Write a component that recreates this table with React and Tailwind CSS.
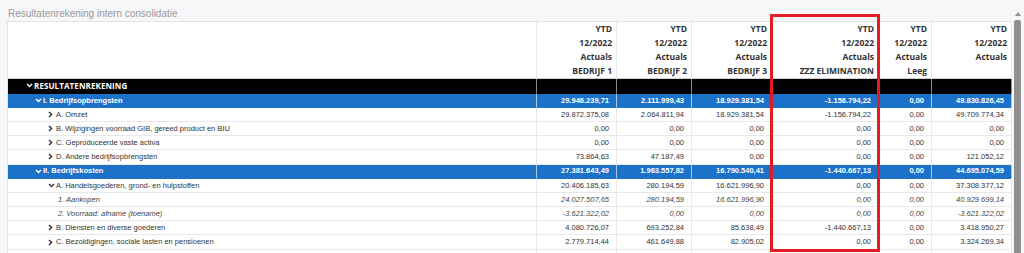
const COLS = 'grid grid-cols-[529px_80px_75px_80px_107px_53px_80px]'

const headers = [
  ['YTD', '12/2022', 'Actuals', 'BEDRIJF 1'],
  ['YTD', '12/2022', 'Actuals', 'BEDRIJF 2'],
  ['YTD', '12/2022', 'Actuals', 'BEDRIJF 3'],
  ['YTD', '12/2022', 'Actuals', 'ZZZ ELIMINATION'],
  ['YTD', '12/2022', 'Actuals', 'Leeg'],
  ['YTD', '12/2022', 'Actuals', ''],
]

const rows = [
  { label: 'RESULTATENREKENING', kind: 'black', chev: 'down', pl: 'pl-[18px]', values: ['', '', '', '', '', ''] },
  { label: 'I. Bedrijfsopbrengsten', kind: 'blue', chev: 'down', pl: 'pl-[27px]', values: ['29.946.239,71', '2.111.999,43', '18.929.381,54', '-1.156.794,22', '0,00', '49.830.826,45'] },
  { label: 'A. Omzet', kind: 'row', chev: 'right', pl: 'pl-[40px]', values: ['29.872.375,08', '2.064.811,94', '18.929.381,54', '-1.156.794,22', '0,00', '49.709.774,34'] },
  { label: 'B. Wijzigingen voorraad GIB, gereed product en BIU', kind: 'row', chev: 'right', pl: 'pl-[40px]', values: ['0,00', '0,00', '0,00', '0,00', '0,00', '0,00'] },
  { label: 'C. Geproduceerde vaste activa', kind: 'row', chev: 'right', pl: 'pl-[40px]', values: ['0,00', '0,00', '0,00', '0,00', '0,00', '0,00'] },
  { label: 'D. Andere bedrijfsopbrengsten', kind: 'row', chev: 'right', pl: 'pl-[40px]', values: ['73.864,63', '47.187,49', '0,00', '0,00', '0,00', '121.052,12'] },
  { label: 'II. Bedrijfskosten', kind: 'blue', chev: 'down', pl: 'pl-[27px]', values: ['27.381.643,49', '1.963.557,82', '16.790.540,41', '-1.440.667,13', '0,00', '44.695.074,59'] },
  { label: 'A. Handelsgoederen, grond- en hulpstoffen', kind: 'row', chev: 'down', pl: 'pl-[40px]', values: ['20.406.185,63', '280.194,59', '16.621.996,90', '0,00', '0,00', '37.308.377,12'] },
  { label: '1. Aankopen', kind: 'italic', chev: null, pl: 'pl-[50px]', values: ['24.027.507,65', '280.194,59', '16.621.996,90', '0,00', '0,00', '40.929.699,14'] },
  { label: '2. Voorraad: afname (toename)', kind: 'italic', chev: null, pl: 'pl-[50px]', values: ['-3.621.322,02', '0,00', '0,00', '0,00', '0,00', '-3.621.322,02'] },
  { label: 'B. Diensten en diverse goederen', kind: 'row', chev: 'right', pl: 'pl-[40px]', values: ['4.080.726,07', '693.252,84', '85.638,49', '-1.440.667,13', '0,00', '3.418.950,27'] },
  { label: 'C. Bezoldigingen, sociale lasten en pensioenen', kind: 'row', chev: 'right', pl: 'pl-[40px]', values: ['2.779.714,44', '461.649,88', '82.905,02', '0,00', '0,00', '3.324.269,34'] },
  { label: 'D. Afschrijvingen en waardeverminderingen op oprichtingskosten, op immateriële en materiële vaste activa', kind: 'row', chev: 'right', pl: 'pl-[40px]', values: ['45.871,00', '112.344,49', '0,00', '0,00', '0,00', '158.215,49'] },
]

function Chevron({ dir, color }) {
  if (dir === 'down') {
    return (
      <svg width="7" height="5" viewBox="0 0 7 5" className="mr-[1px] shrink-0">
        <path d="M1 1 L3.5 3.6 L6 1" fill="none" stroke={color} strokeWidth="1.4" />
      </svg>
    )
  }
  return (
    <svg width="5" height="7" viewBox="0 0 5 7" className="mr-[3px] shrink-0">
      <path d="M1 1 L3.6 3.5 L1 6" fill="none" stroke={color} strokeWidth="1.4" />
    </svg>
  )
}

function Row({ row }) {
  const styles = {
    black: { bg: 'bg-black', line: 'border-[#8a8a8a]', text: 'text-white font-bold', chev: '#ffffff' },
    blue: { bg: 'bg-[#1c71c9]', line: 'border-[#a9c6ea]', text: 'text-white font-bold', chev: '#ffffff' },
    row: { bg: 'bg-white', line: 'border-[#e8e8e8]', text: 'text-[#333]', chev: '#333333' },
    italic: { bg: 'bg-white', line: 'border-[#e8e8e8]', text: 'text-[#444] italic', chev: '#333333' },
  }[row.kind]
  const labelFont = row.kind === 'black'
    ? "font-['Open_Sans',sans-serif] text-[8px] tracking-[0.1px]"
    : "text-[7.5px]"
  return (
    <div className={`${COLS} h-[14.2px] ${styles.bg} ${styles.text}`}>
      <div className={`flex items-center ${row.pl} border-r border-b ${styles.line} ${row.kind === 'black' || row.kind === 'blue' ? 'border-b-transparent' : ''} whitespace-nowrap overflow-hidden`}>
        {row.chev && <Chevron dir={row.chev} color={styles.chev} />}
        <span className={labelFont}>{row.label}</span>
      </div>
      {row.values.map((v, i) => (
        <div key={i} className={`flex items-center justify-end pr-[7px] text-[7.5px] border-r border-b ${styles.line} ${row.kind === 'black' || row.kind === 'blue' ? 'border-b-transparent' : ''}`}>
          {v}
        </div>
      ))}
    </div>
  )
}

export default function App() {
  return (
    <div className="relative w-[1024px] h-[253px] overflow-hidden bg-[#f6f7f9] font-['Liberation_Sans',Arial,sans-serif]">
      <div className="h-[21px] pl-[8px] pt-[8px] text-[10px] leading-[12px] text-[#9a9a9a]">
        Resultatenrekening intern consolidatie
      </div>

      <div className="flex">
        <div className="w-[7px] shrink-0" />
        <div className="w-[1004px] shrink-0 bg-white border-l border-t border-[#e3e3e3]">
          {/* column headers */}
          <div className={`${COLS} border-b border-[#d0d0d0]`}>
            <div className="h-[56.4px] border-r border-[#e8e8e8]" />
            {headers.map((h, i) => (
              <div key={i} className="flex flex-col items-end pr-[4px] border-r border-[#e8e8e8] font-['Open_Sans',sans-serif] font-bold text-[8.5px] leading-[14.1px] text-[#333]">
                {h.map((t, j) => (
                  <span key={j} className="h-[14.1px] whitespace-nowrap">{t}</span>
                ))}
              </div>
            ))}
          </div>
          {rows.map((r, i) => (
            <Row key={i} row={r} />
          ))}
        </div>

        {/* scrollbar */}
        <div className="w-[13px] shrink-0 flex flex-col items-center -mt-[9px]">
          <svg width="6" height="4" viewBox="0 0 6 4" className="mb-[4px]">
            <path d="M0 4 L3 0 L6 4 Z" fill="#8d8d8d" />
          </svg>
          <div className="w-[7px] h-[240px] rounded-t-[2px] bg-[#8f8f8f]" />
        </div>
      </div>

      {/* highlight box */}
      <div className="absolute left-[770px] top-[14px] w-[110px] h-[238px] border-[3px] border-[#e31b23]" />
    </div>
  )
}
